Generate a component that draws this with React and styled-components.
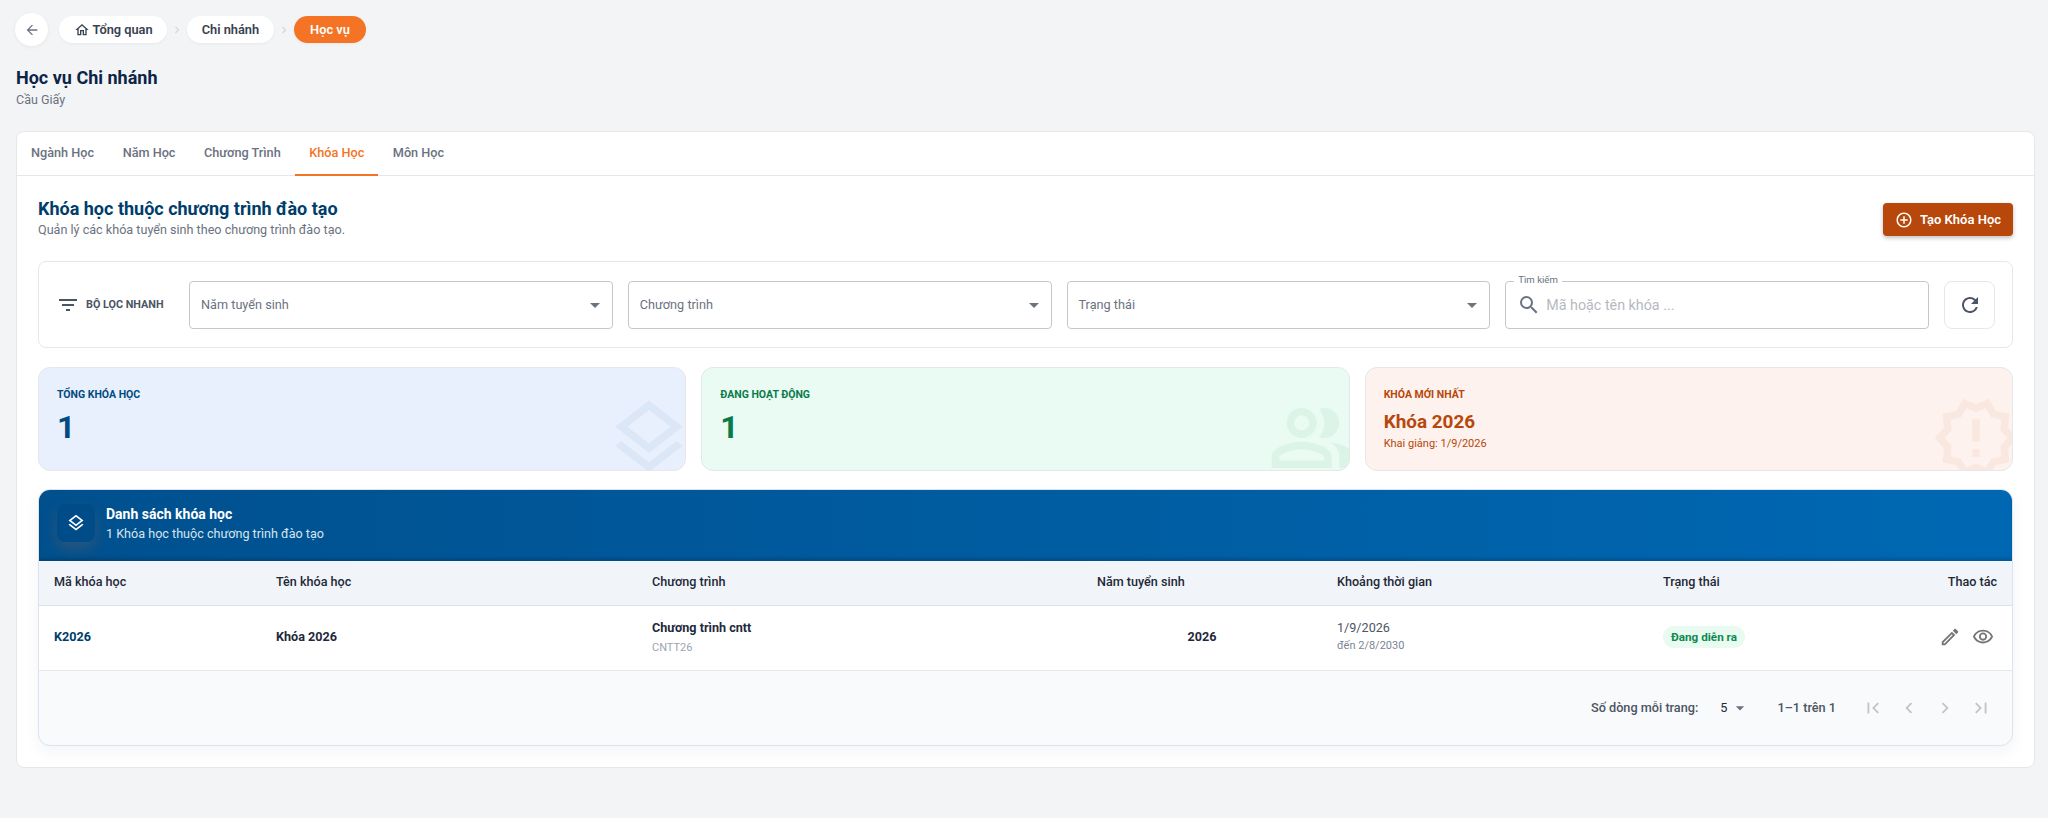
import React from "react";
import styled, { createGlobalStyle } from "styled-components";
import {
  MdArrowBack,
  MdOutlineHome,
  MdNavigateNext,
  MdFilterList,
  MdSearch,
  MdRefresh,
  MdAddCircleOutline,
  MdOutlineEdit,
  MdOutlineVisibility,
  MdFirstPage,
  MdLastPage,
  MdChevronLeft,
  MdChevronRight,
  MdOutlineLayers,
  MdOutlinePeopleAlt,
  MdOutlineNewReleases,
  MdArrowDropDown,
} from "react-icons/md";

const GlobalStyle = createGlobalStyle`
  html, body {
    margin: 0;
    padding: 0;
    background: #f3f4f6;
    font-family: Roboto, "Liberation Sans", sans-serif;
  }
  * { box-sizing: border-box; }
`;

const Page = styled.div`
  height: 818px;
  padding: 13px 13px 0 16px;
  overflow: hidden;
`;

const Crumbs = styled.nav`
  display: flex;
  align-items: center;
  height: 33px;
`;

const BackButton = styled.button`
  width: 33px;
  height: 33px;
  margin-left: -1px;
  margin-right: 11px;
  border: 0;
  border-radius: 50%;
  background: #fff;
  color: #6b7280;
  display: flex;
  align-items: center;
  justify-content: center;
  padding: 0;
  box-shadow: 0 1px 4px rgba(0, 0, 0, 0.06);
  font-size: 16px;
`;

const Chip = styled.span`
  height: 27px;
  padding: 0 ${(p) => (p.$active ? "16.5px" : "14.5px")};
  border-radius: 14px;
  display: inline-flex;
  align-items: center;
  gap: 3px;
  font-size: 12.8px;
  font-weight: 600;
  color: ${(p) => (p.$active ? "#fff" : "#374151")};
  background: ${(p) => (p.$active ? "#f47324" : "#fff")};
  box-shadow: 0 1px 3px rgba(0, 0, 0, 0.05);
  svg {
    font-size: 16px;
  }
`;

const CrumbSep = styled.span`
  width: 20px;
  display: flex;
  justify-content: center;
  color: #d1d5db;
  font-size: 14px;
`;

const PageTitle = styled.h1`
  margin: 19px 0 0;
  font-size: 18px;
  line-height: 26px;
  font-weight: 700;
  color: #0b2447;
`;

const PageSub = styled.div`
  font-size: 12.5px;
  line-height: 17px;
  color: #6b7280;
`;

const Card = styled.section`
  margin-top: 23px;
  background: #fff;
  border: 1px solid #e5e7eb;
  border-radius: 8px;
`;

const Tabs = styled.div`
  display: flex;
  gap: 0.5px;
  height: 44px;
  border-bottom: 1px solid #e5e7eb;
`;

const Tab = styled.div`
  height: 44px;
  padding: 0 14px 2px;
  display: flex;
  align-items: center;
  font-size: 12.7px;
  font-weight: 500;
  color: ${(p) => (p.$active ? "#f47324" : "#6b7280")};
  border-bottom: 2px solid ${(p) => (p.$active ? "#f47324" : "transparent")};
`;

const Body = styled.div`
  padding: 21px 21px 21px 21px;
`;

const SectionHead = styled.div`
  display: flex;
  justify-content: space-between;
  align-items: flex-start;
  height: 64px;
`;

const SectionTitle = styled.h2`
  margin: 0;
  font-size: 18px;
  line-height: 24px;
  font-weight: 700;
  color: #003d6b;
`;

const SectionSub = styled.div`
  font-size: 12.6px;
  line-height: 17px;
  color: #6b7280;
`;

const CreateButton = styled.button`
  margin-top: 6px;
  height: 33px;
  width: 130px;
  border: 0;
  border-radius: 4px;
  background: #b7470a;
  color: #fff;
  display: flex;
  align-items: center;
  justify-content: center;
  gap: 7px;
  padding: 0;
  font-family: inherit;
  font-size: 13px;
  font-weight: 600;
  box-shadow: 0 2px 4px rgba(0, 0, 0, 0.25);
  svg {
    font-size: 18px;
  }
`;

const FilterBar = styled.div`
  height: 87px;
  display: flex;
  align-items: center;
  gap: 15px;
  padding: 0 17px 0 17px;
  border: 1px solid #e5e7eb;
  border-radius: 8px;
`;

const FilterLabel = styled.div`
  width: 118px;
  display: flex;
  align-items: center;
  gap: 6px;
  color: #4b5563;
  font-size: 10.8px;
  font-weight: 700;
  svg {
    font-size: 24px;
    flex: none;
  }
`;

const Field = styled.div`
  position: relative;
  flex: 1;
  height: 48px;
  padding: 0 5px 0 11px;
  display: flex;
  align-items: center;
  justify-content: space-between;
  border: 1px solid #c4c7cc;
  border-radius: 4px;
  font-size: 12.7px;
  color: #6b7280;
  svg {
    font-size: 24px;
    color: #6b7280;
  }
`;

const SearchField = styled(Field)`
  justify-content: flex-start;
  gap: 5px;
  font-size: 14.3px;
  color: #b5b9c0;
`;

const FloatLabel = styled.span`
  position: absolute;
  top: -9px;
  left: 8px;
  padding: 0 4px;
  background: #fff;
  font-size: 9.6px;
  line-height: 14px;
  color: #6b7280;
`;

const RefreshButton = styled.button`
  width: 51px;
  height: 48px;
  flex: none;
  border: 1px solid #e5e7eb;
  border-radius: 8px;
  background: #fff;
  color: #4b5563;
  display: flex;
  align-items: center;
  justify-content: center;
  padding: 0;
  font-size: 24px;
`;

const StatRow = styled.div`
  margin-top: 19px;
  display: grid;
  grid-template-columns: repeat(3, 1fr);
  gap: 15px;
`;

const StatCard = styled.div`
  position: relative;
  height: 104px;
  overflow: hidden;
  padding: 19px 18px;
  border: 1px solid #e5e7eb;
  border-radius: 12px;
  background: ${(p) => p.$bg};
  color: ${(p) => p.$fg};
  svg {
    position: absolute;
    right: -9px;
    bottom: -13px;
    font-size: 90px;
    color: ${(p) => p.$fg};
    opacity: 0.055;
  }
`;

const StatLabel = styled.div`
  font-size: 10.5px;
  line-height: 16px;
  font-weight: 700;
`;

const StatValue = styled.div`
  margin-top: 5px;
  font-size: 32px;
  line-height: 38px;
  font-weight: 700;
`;

const StatName = styled.div`
  margin-top: 6px;
  font-size: 18.9px;
  line-height: 26px;
  font-weight: 700;
`;

const StatNote = styled.div`
  margin-top: 1px;
  font-size: 11px;
  line-height: 15px;
`;

const TableCard = styled.div`
  margin-top: 18px;
  border: 1px solid #dbe3ec;
  border-radius: 12px;
  overflow: hidden;
  background: #f9fafb;
  box-shadow: 0 6px 16px rgba(0, 40, 90, 0.05);
`;

const TableHead = styled.div`
  height: 71px;
  display: flex;
  align-items: center;
  gap: 11px;
  padding: 0 18px 6px;
  background: linear-gradient(90deg, #00508e 0%, #0068b3 100%);
  box-shadow: inset 0 -3px 3px rgba(0, 0, 0, 0.14);
  color: #fff;
`;

const HeadIcon = styled.div`
  width: 38px;
  height: 38px;
  border-radius: 8px;
  background: #004c88;
  display: flex;
  align-items: center;
  justify-content: center;
  font-size: 20px;
  box-shadow: 0 6px 14px rgba(244, 115, 36, 0.18);
`;

const HeadTitle = styled.div`
  font-size: 14px;
  line-height: 20px;
  font-weight: 700;
`;

const HeadSub = styled.div`
  margin-top: 1px;
  font-size: 12.6px;
  line-height: 17px;
  color: #d6e4f0;
`;

const Grid = styled.table`
  width: 100%;
  border-collapse: collapse;
  table-layout: fixed;
`;

const Th = styled.th`
  height: 44px;
  padding: 0 15px 2px;
  font-size: 12.6px;
  font-weight: 500;
  color: #1f2937;
  background: #f1f5f9;
  border-bottom: 1px solid #dbe3ec;
  text-align: ${(p) => p.$align || "left"};
`;

const Td = styled.td`
  height: 65px;
  padding: 0 15px 2px;
  background: #fff;
  border-bottom: 1px solid #e5e7eb;
  font-size: 12.6px;
  color: ${(p) => p.$color || "#4b5563"};
  font-weight: ${(p) => (p.$bold ? 700 : 400)};
  text-align: ${(p) => p.$align || "left"};
`;

const Strong = styled.div`
  font-weight: 700;
  line-height: 18px;
  color: #1e293b;
`;

const Muted = styled.div`
  margin-top: 3px;
  font-size: 11px;
  line-height: 15px;
  color: #9ca3af;
`;

const DateEnd = styled(Muted)`
  color: #7b8494;
`;

const Badge = styled.span`
  display: inline-block;
  height: 22px;
  padding: 0 8px;
  border-radius: 11px;
  background: #e9fbf1;
  color: #0b8a50;
  font-size: 11.7px;
  font-weight: 700;
  line-height: 22px;
`;

const Actions = styled.div`
  display: flex;
  justify-content: flex-end;
  align-items: center;
  gap: 11px;
  margin-right: 3px;
  color: #757575;
  font-size: 22px;
`;

const Pager = styled.div`
  height: 74px;
  display: flex;
  align-items: center;
  justify-content: flex-end;
  padding-right: 20px;
  font-size: 12.7px;
  font-weight: 500;
  color: #4b5563;
`;

const PageSize = styled.span`
  margin-left: 22px;
  display: flex;
  align-items: center;
  gap: 3px;
  color: #1f2937;
  font-weight: 400;
  svg {
    font-size: 20px;
    color: #6b7280;
  }
`;

const PageRange = styled.span`
  margin: 0 26px 0 27px;
`;

const PageIcons = styled.div`
  display: flex;
  gap: 14px;
  color: #c0c4cb;
  font-size: 22px;
`;

const columns = [
  { label: "Mã khóa học", width: 222 },
  { label: "Tên khóa học", width: 376 },
  { label: "Chương trình", width: 445 },
  { label: "Năm tuyển sinh", width: 240 },
  { label: "Khoảng thời gian", width: 326 },
  { label: "Trạng thái", width: 250 },
  { label: "Thao tác", align: "right" },
];

const stats = [
  { label: "TỔNG KHÓA HỌC", value: "1", bg: "#e8f0fd", fg: "#004a80", Icon: MdOutlineLayers },
  { label: "ĐANG HOẠT ĐỘNG", value: "1", bg: "#e9fbf2", fg: "#0b7a4b", Icon: MdOutlinePeopleAlt },
  { label: "KHÓA MỚI NHẤT", name: "Khóa 2026", note: "Khai giảng: 1/9/2026", bg: "#fdf2ed", fg: "#b7470a", Icon: MdOutlineNewReleases },
];

export default function App() {
  return (
    <Page>
      <GlobalStyle />
      <Crumbs>
        <BackButton>
          <MdArrowBack />
        </BackButton>
        <Chip>
          <MdOutlineHome /> Tổng quan
        </Chip>
        <CrumbSep>
          <MdNavigateNext />
        </CrumbSep>
        <Chip>Chi nhánh</Chip>
        <CrumbSep>
          <MdNavigateNext />
        </CrumbSep>
        <Chip $active>Học vụ</Chip>
      </Crumbs>
      <PageTitle>Học vụ Chi nhánh</PageTitle>
      <PageSub>Cầu Giấy</PageSub>

      <Card>
        <Tabs>
          <Tab>Ngành Học</Tab>
          <Tab>Năm Học</Tab>
          <Tab>Chương Trình</Tab>
          <Tab $active>Khóa Học</Tab>
          <Tab>Môn Học</Tab>
        </Tabs>
        <Body>
          <SectionHead>
            <div>
              <SectionTitle>Khóa học thuộc chương trình đào tạo</SectionTitle>
              <SectionSub>Quản lý các khóa tuyển sinh theo chương trình đào tạo.</SectionSub>
            </div>
            <CreateButton>
              <MdAddCircleOutline /> Tạo Khóa Học
            </CreateButton>
          </SectionHead>

          <FilterBar>
            <FilterLabel>
              <MdFilterList /> BỘ LỌC NHANH
            </FilterLabel>
            <Field>
              Năm tuyển sinh <MdArrowDropDown />
            </Field>
            <Field>
              Chương trình <MdArrowDropDown />
            </Field>
            <Field>
              Trạng thái <MdArrowDropDown />
            </Field>
            <SearchField>
              <FloatLabel>Tìm kiếm</FloatLabel>
              <MdSearch />
              Mã hoặc tên khóa ...
            </SearchField>
            <RefreshButton>
              <MdRefresh />
            </RefreshButton>
          </FilterBar>

          <StatRow>
            {stats.map(({ label, value, name, note, bg, fg, Icon }) => (
              <StatCard key={label} $bg={bg} $fg={fg}>
                <StatLabel>{label}</StatLabel>
                {value && <StatValue>{value}</StatValue>}
                {name && <StatName>{name}</StatName>}
                {note && <StatNote>{note}</StatNote>}
                <Icon />
              </StatCard>
            ))}
          </StatRow>

          <TableCard>
            <TableHead>
              <HeadIcon>
                <MdOutlineLayers />
              </HeadIcon>
              <div>
                <HeadTitle>Danh sách khóa học</HeadTitle>
                <HeadSub>1 Khóa học thuộc chương trình đào tạo</HeadSub>
              </div>
            </TableHead>
            <Grid>
              <colgroup>
                {columns.map((c) => (
                  <col key={c.label} style={c.width ? { width: c.width } : undefined} />
                ))}
              </colgroup>
              <thead>
                <tr>
                  {columns.map((c) => (
                    <Th key={c.label} $align={c.align}>
                      {c.label}
                    </Th>
                  ))}
                </tr>
              </thead>
              <tbody>
                <tr>
                  <Td $bold $color="#003d6b">K2026</Td>
                  <Td $bold $color="#1e293b">Khóa 2026</Td>
                  <Td>
                    <Strong>Chương trình cntt</Strong>
                    <Muted>CNTT26</Muted>
                  </Td>
                  <Td $bold $align="center" $color="#1e293b">2026</Td>
                  <Td>
                    <div>1/9/2026</div>
                    <DateEnd>đến 2/8/2030</DateEnd>
                  </Td>
                  <Td>
                    <Badge>Đang diễn ra</Badge>
                  </Td>
                  <Td>
                    <Actions>
                      <MdOutlineEdit />
                      <MdOutlineVisibility />
                    </Actions>
                  </Td>
                </tr>
              </tbody>
            </Grid>
            <Pager>
              Số dòng mỗi trang:
              <PageSize>
                5 <MdArrowDropDown />
              </PageSize>
              <PageRange>1–1 trên 1</PageRange>
              <PageIcons>
                <MdFirstPage />
                <MdChevronLeft />
                <MdChevronRight />
                <MdLastPage />
              </PageIcons>
            </Pager>
          </TableCard>
        </Body>
      </Card>
    </Page>
  );
}
